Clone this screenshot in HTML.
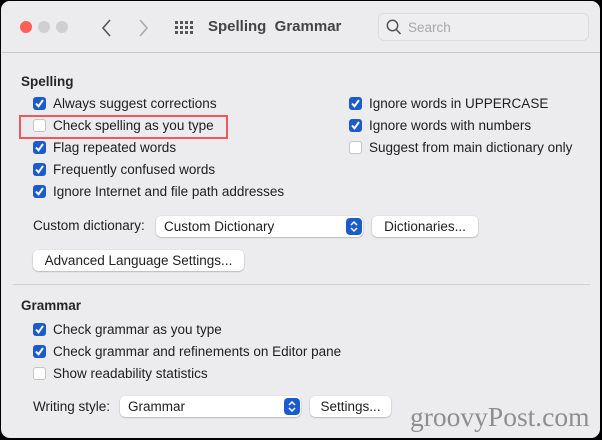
<!DOCTYPE html>
<html><head><meta charset="utf-8"><style>
*{box-sizing:border-box;margin:0;padding:0}
html,body{width:602px;height:440px;overflow:hidden;background:#000}
body{font-family:"Liberation Sans",sans-serif;color:#1e1e1e;font-size:13.5px}
#win{position:absolute;left:1px;top:1px;width:599px;height:437px;background:#ececee;border-radius:9px;overflow:hidden}
.tb{position:absolute;left:0;top:0;width:100%;height:52px;background:#ececee;border-bottom:1px solid #c8c8ca}
.abs{position:absolute}
.dot{position:absolute;width:12px;height:12px;border-radius:50%;top:20px}
.cb{position:absolute;width:13px;height:13px;border-radius:3px;background:#1c5bcc}
.cb.off{background:#fff;border:1px solid #c4c4c4}
.cb svg{position:absolute;left:1px;top:1px}
.t{position:absolute;white-space:nowrap;line-height:16px}
.btn{position:absolute;height:21px;background:#fff;border-radius:5px;box-shadow:0 0.5px 1.5px rgba(0,0,0,.35);line-height:21px;white-space:nowrap}
.step{position:absolute;right:1px;top:2px;width:16px;height:17px;background:#1c5bcc;border-radius:4px}
h3{position:absolute;font-size:13.5px;font-weight:bold;color:#262626}
</style></head><body><div id="win">
<div class="tb">
<div class="dot" style="left:19px;background:#fe5f57"></div>
<div class="dot" style="left:37px;background:#cfcfcf"></div>
<div class="dot" style="left:55px;background:#cfcfcf"></div>
<svg class="abs" style="left:100px;top:17px" width="12" height="20"><path d="M9 2 L2 10 L9 18" stroke="#555" stroke-width="1.6" fill="none"/></svg>
<svg class="abs" style="left:136px;top:17px" width="12" height="20"><path d="M3 2 L10 10 L3 18" stroke="#aaa" stroke-width="1.6" fill="none"/></svg>
<svg class="abs" style="left:174px;top:20px" width="20" height="14" fill="#555">
<rect x="0" y="0" width="3" height="3"/><rect x="5" y="0" width="3" height="3"/><rect x="10" y="0" width="3" height="3"/><rect x="15" y="0" width="3" height="3"/>
<rect x="0" y="5" width="3" height="3"/><rect x="5" y="5" width="3" height="3"/><rect x="10" y="5" width="3" height="3"/><rect x="15" y="5" width="3" height="3"/>
<rect x="0" y="10" width="3" height="3"/><rect x="5" y="10" width="3" height="3"/><rect x="10" y="10" width="3" height="3"/><rect x="15" y="10" width="3" height="3"/></svg>
<div class="t" style="left:207px;top:18px;font-size:15px;font-weight:bold;color:#444">Spelling&nbsp; Grammar</div>
<div class="abs" style="left:377px;top:12px;width:211px;height:28px;border:1px solid #dcdcde;border-radius:6px;background:#eeeef0"></div>
<svg class="abs" style="left:385px;top:18px" width="16" height="17"><circle cx="6.5" cy="6.5" r="5.2" stroke="#555" stroke-width="1.5" fill="none"/><path d="M10.3 10.5 L14.5 15" stroke="#555" stroke-width="1.6"/></svg>
<div class="t" style="left:407px;top:19px;color:#a8a8a8">Search</div>
</div>

<h3 style="left:20px;top:73px">Spelling</h3>

<div class="cb" style="left:32px;top:96px"><svg width="11" height="11"><path d="M2 5.5 L4.5 8.3 L9 2" stroke="#fff" stroke-width="2" fill="none"/></svg></div>
<div class="t" style="left:52px;top:95px">Always suggest corrections</div>
<div class="abs" style="left:18px;top:114px;width:209px;height:24px;border:2px solid #f0585a"></div>
<div class="cb off" style="left:32px;top:118px"></div>
<div class="t" style="left:52px;top:117px">Check spelling as you type</div>
<div class="cb" style="left:32px;top:140px"><svg width="11" height="11"><path d="M2 5.5 L4.5 8.3 L9 2" stroke="#fff" stroke-width="2" fill="none"/></svg></div>
<div class="t" style="left:52px;top:139px">Flag repeated words</div>
<div class="cb" style="left:32px;top:162px"><svg width="11" height="11"><path d="M2 5.5 L4.5 8.3 L9 2" stroke="#fff" stroke-width="2" fill="none"/></svg></div>
<div class="t" style="left:52px;top:161px">Frequently confused words</div>
<div class="cb" style="left:32px;top:184px"><svg width="11" height="11"><path d="M2 5.5 L4.5 8.3 L9 2" stroke="#fff" stroke-width="2" fill="none"/></svg></div>
<div class="t" style="left:52px;top:183px">Ignore Internet and file path addresses</div>

<div class="cb" style="left:348px;top:96px"><svg width="11" height="11"><path d="M2 5.5 L4.5 8.3 L9 2" stroke="#fff" stroke-width="2" fill="none"/></svg></div>
<div class="t" style="left:368px;top:95px">Ignore words in UPPERCASE</div>
<div class="cb" style="left:348px;top:118px"><svg width="11" height="11"><path d="M2 5.5 L4.5 8.3 L9 2" stroke="#fff" stroke-width="2" fill="none"/></svg></div>
<div class="t" style="left:368px;top:117px">Ignore words with numbers</div>
<div class="cb off" style="left:348px;top:140px"></div>
<div class="t" style="left:368px;top:139px">Suggest from main dictionary only</div>

<div class="t" style="left:32px;top:217px">Custom dictionary:</div>
<div class="btn" style="left:155px;top:215px;width:207px;padding-left:8px">Custom Dictionary<div class="step"><svg width="16" height="17"><path d="M5 7 L8 4 L11 7 M5 10 L8 13 L11 10" stroke="#fff" stroke-width="1.5" fill="none"/></svg></div></div>
<div class="btn" style="left:371px;top:215px;width:106px;text-align:center">Dictionaries...</div>
<div class="btn" style="left:32px;top:249px;width:211px;text-align:center">Advanced Language Settings...</div>

<div class="abs" style="left:12px;top:283px;width:577px;height:1px;background:#d0d0d2"></div>

<h3 style="left:20px;top:297px">Grammar</h3>
<div class="cb" style="left:32px;top:322px"><svg width="11" height="11"><path d="M2 5.5 L4.5 8.3 L9 2" stroke="#fff" stroke-width="2" fill="none"/></svg></div>
<div class="t" style="left:52px;top:321px">Check grammar as you type</div>
<div class="cb" style="left:32px;top:344px"><svg width="11" height="11"><path d="M2 5.5 L4.5 8.3 L9 2" stroke="#fff" stroke-width="2" fill="none"/></svg></div>
<div class="t" style="left:52px;top:343px">Check grammar and refinements on Editor pane</div>
<div class="cb off" style="left:32px;top:366px"></div>
<div class="t" style="left:52px;top:365px">Show readability statistics</div>

<div class="t" style="left:32px;top:398px">Writing style:</div>
<div class="btn" style="left:119px;top:395px;width:181px;padding-left:8px">Grammar<div class="step"><svg width="16" height="17"><path d="M5 7 L8 4 L11 7 M5 10 L8 13 L11 10" stroke="#fff" stroke-width="1.5" fill="none"/></svg></div></div>
<div class="btn" style="left:309px;top:395px;width:81px;text-align:center">Settings...</div>

<div class="t" style="left:409px;top:400px;font-family:'Liberation Serif',serif;font-size:27.5px;line-height:32px;color:#8e8e8e">groovyPost.com</div>
</div></body></html>
